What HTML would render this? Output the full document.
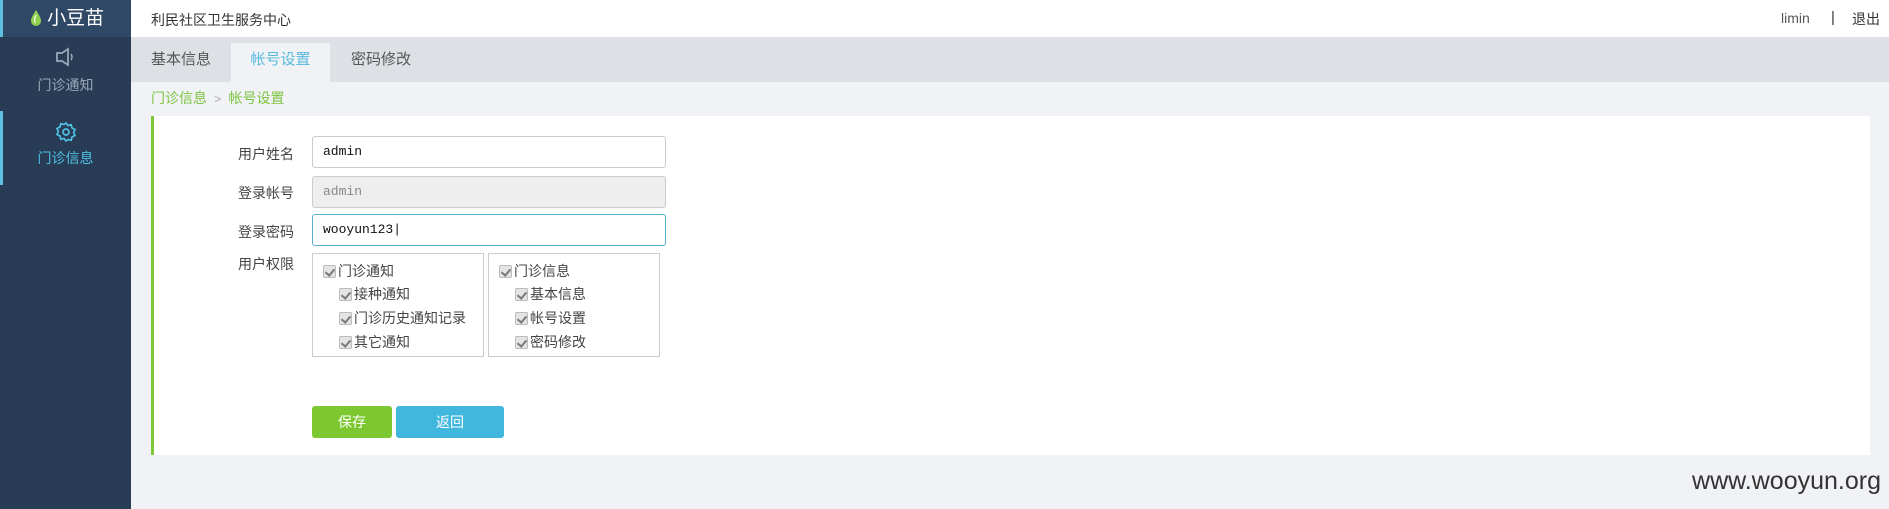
<!DOCTYPE html>
<html><head><meta charset="utf-8"><style>
*{margin:0;padding:0;box-sizing:border-box}
body{width:1889px;height:509px;overflow:hidden;background:#f1f2f5;font-family:"Liberation Sans","Noto Sans CJK SC",sans-serif;font-size:14px;color:#333;position:relative}
.abs{position:absolute}
.side{left:0;top:0;width:131px;height:509px;background:#283c55}
.logo{left:0;top:0;width:131px;height:37px;background:#2f4866;color:#fff;font-size:19px;line-height:37px;text-align:center;border-left:3px solid #5ec0de}
.ni{width:131px;text-align:center;color:#9aa8b8;font-size:14px}
.top{left:131px;top:0;width:1758px;height:37px;background:#fff}
.tabs{left:131px;top:37px;width:1758px;height:45px;background:#dde0e4}
.tab{top:0;height:45px;line-height:45px;font-size:15px;color:#555}
.lbl{left:238px;font-size:14px;color:#444}
.inp{left:312px;width:354px;height:32px;border:1px solid #ccc;border-radius:3px;background:#fff;font-family:"Liberation Mono",monospace;font-size:13px;line-height:30px;padding-left:10px;color:#111}
.box{top:253px;height:104px;border:1px solid #ccc;background:#fff;font-size:14px;color:#444}
.cb{display:inline-block;width:13px;height:13px;background:#e4e4e4;border:1px solid #bbb;border-radius:2px;vertical-align:-2px;margin-right:2px;position:relative}
.cb:after{content:"";position:absolute;left:3px;top:1px;width:4px;height:7px;border:solid #777;border-width:0 2px 2px 0;transform:rotate(40deg)}
.r{position:absolute;white-space:nowrap}
.btn{top:406px;height:32px;border-radius:3px;color:#fff;text-align:center;line-height:32px;font-size:14px}
</style></head><body>
<div class="abs side"></div>
<div class="abs logo"><svg width="12" height="18" viewBox="0 0 12 18" style="vertical-align:-3px"><path d="M6 1C3 6 1 9 1 12a5 5 0 0 0 10 0C11 9 9 6 6 1z" fill="#8fd14f"/><path d="M6 6c-1.5 3-2 5-1 8" stroke="#fff" stroke-width="1.2" fill="none"/></svg> 小豆苗</div>
<div class="abs ni" style="top:46px">
<svg width="24" height="22" viewBox="0 0 24 22"><path d="M3 7h5l6-4v16l-6-4H3z" fill="none" stroke="#9aa8b8" stroke-width="1.8"/><path d="M17 8q2 3 0 6" fill="none" stroke="#9aa8b8" stroke-width="1.6"/></svg>
<div style="margin-top:4px">门诊通知</div></div>
<div class="abs" style="left:0;top:111px;width:3px;height:74px;background:#5ec0de"></div>
<div class="abs ni" style="top:121px;color:#4fc0e4">
<svg width="22" height="22" viewBox="0 0 22 22"><path d="M11 2l2 2.5 3.2-.7.8 3.2 3 1.5-1.4 3 1.4 3-3 1.5-.8 3.2-3.2-.7L11 20l-2-2.5-3.2.7-.8-3.2-3-1.5 1.4-3-1.4-3 3-1.5.8-3.2 3.2.7z" fill="none" stroke="#4fc0e4" stroke-width="1.7"/><circle cx="11" cy="11" r="3" fill="none" stroke="#4fc0e4" stroke-width="1.7"/></svg>
<div style="margin-top:2px">门诊信息</div></div>
<div class="abs top"></div>
<div class="abs" style="left:151px;top:10px;font-size:14px;color:#333">利民社区卫生服务中心</div>
<div class="abs" style="left:1781px;top:10px;font-size:14px;color:#555">limin</div>
<div class="abs" style="left:1831px;top:9px;font-size:15px;color:#333">|</div>
<div class="abs" style="left:1852px;top:9px;font-size:14px;color:#333">退出</div>
<div class="abs tabs">
<div class="abs tab" style="left:20px">基本信息</div>
<div class="abs tab" style="left:100px;width:99px;top:6px;height:39px;line-height:34px;background:#f1f2f5;color:#5ab9de;text-align:center">帐号设置</div>
<div class="abs tab" style="left:220px">密码修改</div>
</div>
<div class="abs" style="left:151px;top:88px;font-size:14px;color:#7cc440">门诊信息 <span style="color:#aaa;font-size:12px">&nbsp;&gt;&nbsp;</span> 帐号设置</div>
<div class="abs" style="left:151px;top:116px;width:1719px;height:339px;background:#fff;border-left:3px solid #7cc838"></div>
<div class="abs lbl" style="top:144px">用户姓名</div>
<div class="abs inp" style="top:136px">admin</div>
<div class="abs lbl" style="top:183px">登录帐号</div>
<div class="abs inp" style="top:176px;background:#eee;color:#888">admin</div>
<div class="abs lbl" style="top:222px">登录密码</div>
<div class="abs inp" style="top:214px;border-color:#5aaed0">wooyun123|</div>
<div class="abs lbl" style="top:254px">用户权限</div>
<div class="abs box" style="left:312px;width:172px">
<div class="r" style="left:10px;top:7px"><span class="cb"></span>门诊通知</div>
<div class="r" style="left:26px;top:30px"><span class="cb"></span>接种通知</div>
<div class="r" style="left:26px;top:54px"><span class="cb"></span>门诊历史通知记录</div>
<div class="r" style="left:26px;top:78px"><span class="cb"></span>其它通知</div>
</div>
<div class="abs box" style="left:488px;width:172px">
<div class="r" style="left:10px;top:7px"><span class="cb"></span>门诊信息</div>
<div class="r" style="left:26px;top:30px"><span class="cb"></span>基本信息</div>
<div class="r" style="left:26px;top:54px"><span class="cb"></span>帐号设置</div>
<div class="r" style="left:26px;top:78px"><span class="cb"></span>密码修改</div>
</div>
<div class="abs btn" style="left:312px;width:80px;background:#7dc831">保存</div>
<div class="abs btn" style="left:396px;width:108px;background:#41b7dd">返回</div>
<div class="abs" style="right:8px;top:467px;font-size:25px;color:#333;font-family:'Liberation Sans',sans-serif">www.wooyun.org</div>
</body></html>
